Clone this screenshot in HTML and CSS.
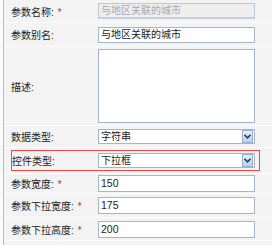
FILE: index.html
```html
<!DOCTYPE html>
<html lang="zh-CN">
<head>
    <meta charset="UTF-8">
    <title>参数设置</title>
    <link rel="stylesheet" href="styles.css">
</head>
<body>
    <div class="panel">
        <div class="row r1">
            <div class="lbl">参数名称:<span class="req">*</span></div>
            <div class="field disabled">与地区关联的城市</div>
        </div>
        <div class="row r2">
            <div class="lbl">参数别名:</div>
            <div class="field">与地区关联的城市</div>
        </div>
        <div class="row r3">
            <div class="lbl">描述:</div>
            <div class="field area"></div>
        </div>
        <div class="row r4">
            <div class="lbl">数据类型:</div>
            <div class="field select">
                <span>字符串</span>
                <span class="drop"><svg width="7" height="5" viewBox="0 0 7 5"><path d="M0.5 0.8 L3.5 3.8 L6.5 0.8" fill="none" stroke="#2b3f66" stroke-width="1.6"/></svg></span>
            </div>
        </div>
        <div class="row r5">
            <div class="mark">
                <div class="lbl">控件类型:</div>
                <div class="field select">
                    <span>下拉框</span>
                    <span class="drop"><svg width="7" height="5" viewBox="0 0 7 5"><path d="M0.5 0.8 L3.5 3.8 L6.5 0.8" fill="none" stroke="#2b3f66" stroke-width="1.6"/></svg></span>
                </div>
            </div>
        </div>
        <div class="row r6">
            <div class="lbl">参数宽度:<span class="req">*</span></div>
            <div class="field num">150</div>
        </div>
        <div class="row r7">
            <div class="lbl">参数下拉宽度:<span class="req">*</span></div>
            <div class="field num">175</div>
        </div>
        <div class="row r8">
            <div class="lbl">参数下拉高度:<span class="req">*</span></div>
            <div class="field num">200</div>
        </div>
        <div class="row r9"></div>
    </div>
</body>
</html>
```
FILE: styles.css
```css
body {
    margin: 0;
    background: #fafafa;
    font-family: "Liberation Sans", "Noto Sans CJK SC", sans-serif;
    font-size: 10px;
    color: #222;
}
.panel {
    margin-left: 3px;
    border-left: 1px solid #b5bfcb;
    background: #f3f3f3;
    height: 245px;
    overflow: hidden;
}
.row {
    display: flex;
    align-items: center;
    border-bottom: 1px solid #fcfcfc;
}
.r1 { height: 22px; }
.r2 { height: 23px; }
.r3 { height: 78px; }
.r4 { height: 21px; }
.r5 { height: 25px; }
.r6 { height: 19px; }
.r7 { height: 23px; }
.r8 { height: 22px; }
.r9 { height: 10px; }
.lbl {
    box-sizing: border-box;
    width: 94px;
    padding-left: 7px;
    white-space: nowrap;
}
.req {
    color: #e02020;
    margin-left: 4px;
}
.field {
    box-sizing: border-box;
    width: 157px;
    height: 16px;
    border: 1px solid #a3b6cb;
    background: #fff;
    padding-left: 2px;
    line-height: 14px;
    white-space: nowrap;
}
.disabled {
    background: #eeeeee;
    color: #a8a8a8;
    border-color: #b9c7d6;
    border-bottom: 2px solid #c3d0dd;
}
.area {
    height: 74px;
}
.select {
    display: flex;
    justify-content: space-between;
    align-items: center;
    height: 15px;
    line-height: 13px;
    padding-right: 1px;
}
.drop {
    display: flex;
    align-items: center;
    justify-content: center;
    box-sizing: border-box;
    width: 11px;
    height: 13px;
    border: 1px solid #98aecb;
    background: linear-gradient(#e4eefb, #bcd0ea);
}
.num {
    height: 17px;
    line-height: 15px;
    font-size: 10.5px;
}
.mark {
    display: flex;
    align-items: center;
    box-sizing: border-box;
    width: 249px;
    height: 21px;
    margin-left: 7px;
    border: 1px solid #f04848;
}
.mark .lbl {
    width: 86px;
    padding-left: 0;
}
```
